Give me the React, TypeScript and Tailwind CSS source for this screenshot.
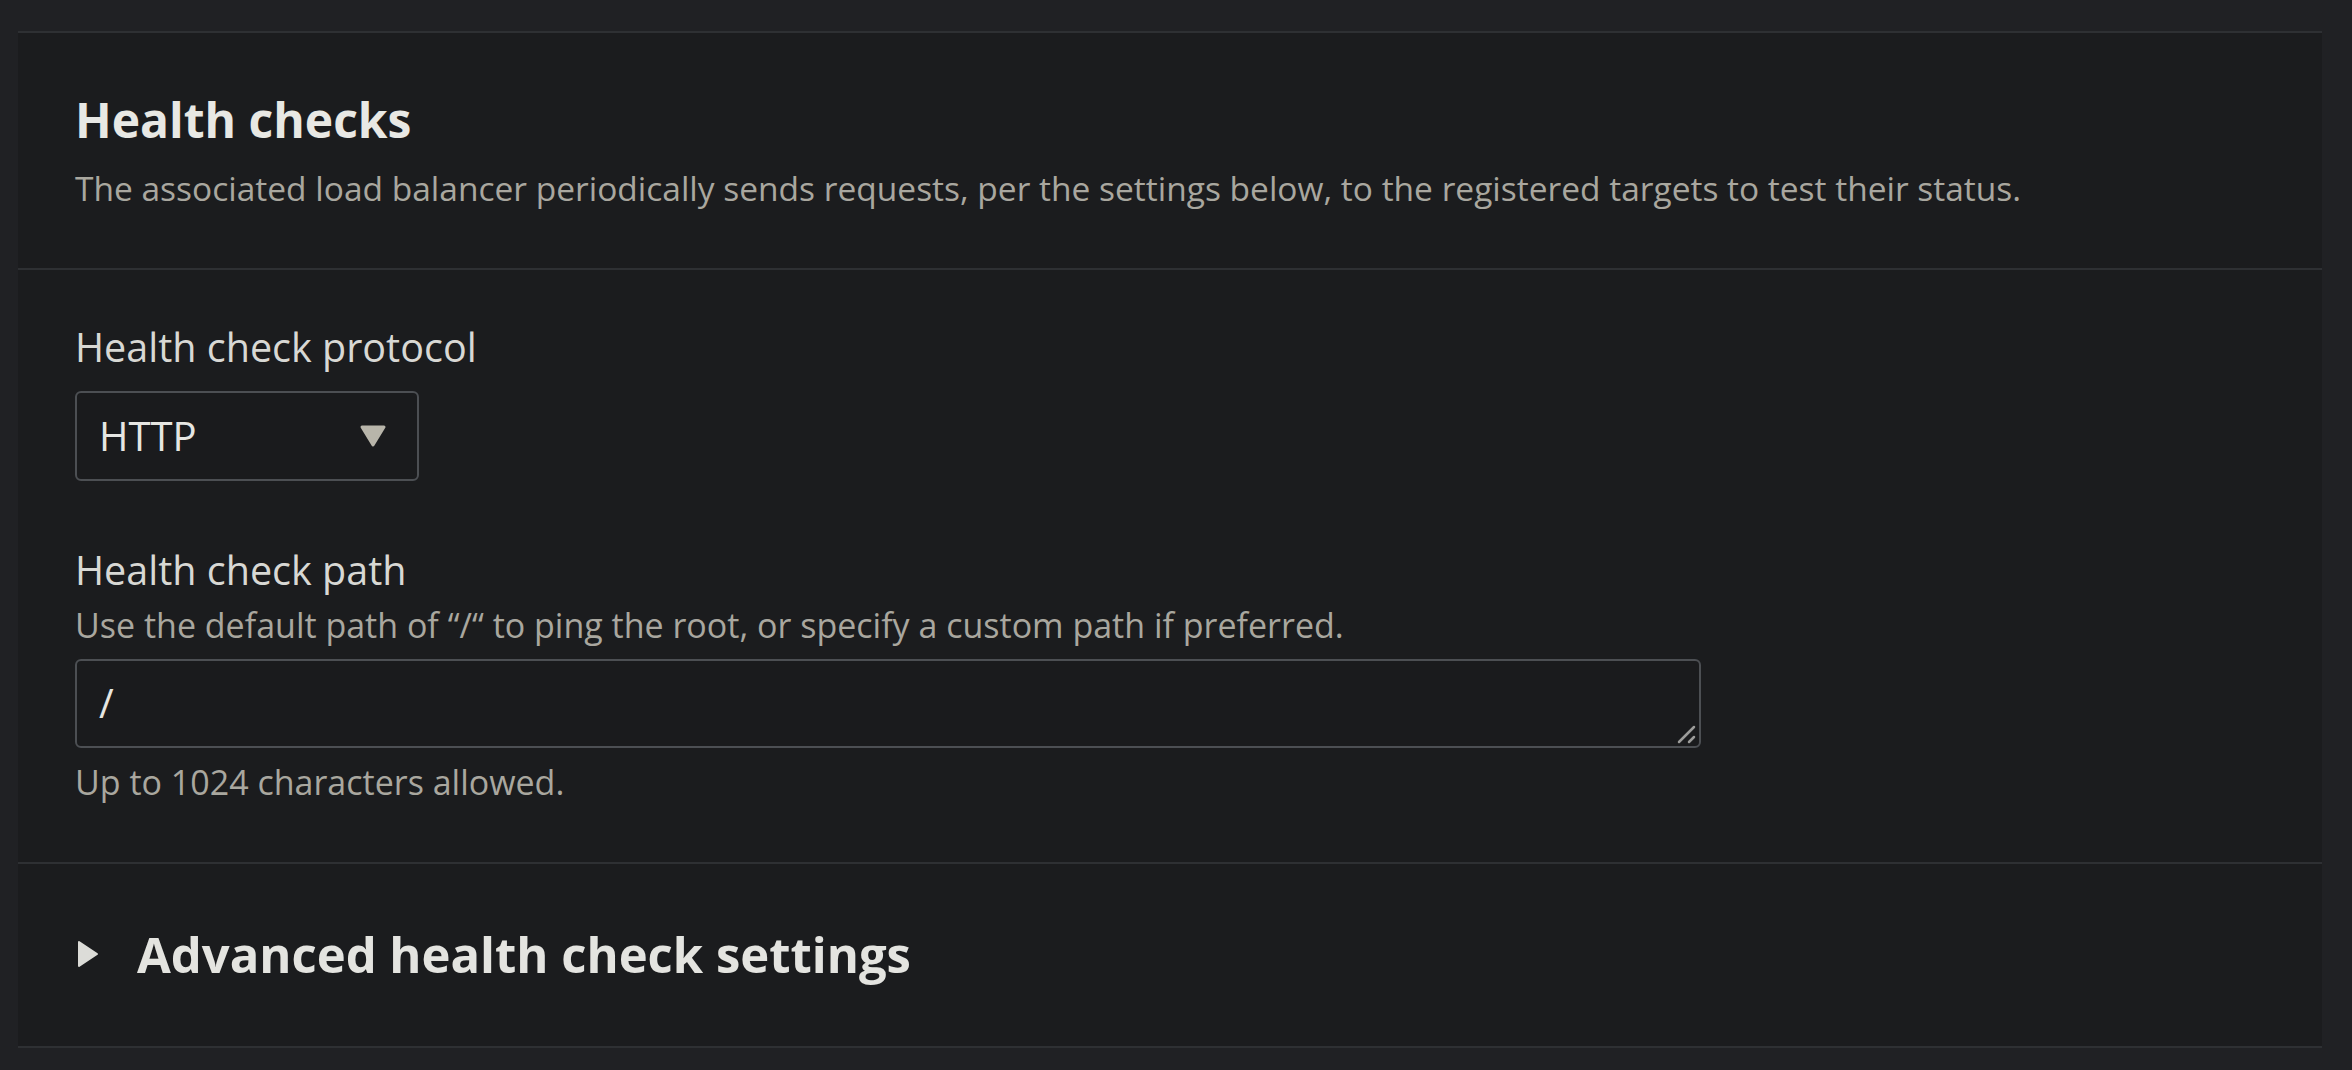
import React from "react";

const font = { fontFamily: '"Open Sans", "Noto Sans", "Liberation Sans", sans-serif' };

function CaretDown() {
  return (
    <svg width="28" height="24" viewBox="0 0 28 24" className="shrink-0">
      <path d="M3 3 L25 3 L14 21 Z" fill="#b8b5aa" stroke="#b8b5aa" strokeWidth="3" strokeLinejoin="round" />
    </svg>
  );
}

function CaretRight() {
  return (
    <svg width="24" height="30" viewBox="0 0 24 30" className="shrink-0">
      <path d="M3 3 L21 15 L3 27 Z" fill="#dcdcd8" stroke="#dcdcd8" strokeWidth="2" strokeLinejoin="round" />
    </svg>
  );
}

export default function App() {
  return (
    <div className="min-h-screen w-full bg-[#202124] pt-[31px] px-[18px] pr-[30px]" style={font}>
      {/* Health checks container */}
      <div className="bg-[#1b1c1e] border-y-2 border-[#2e3033]">
        {/* Header */}
        <div className="px-[57px] pt-[57px] pb-[58px]">
          <h2 className="text-[48px] leading-[60px] font-bold text-[#e8e8e4]">Health checks</h2>
          <p className="mt-[16px] text-[33.5px] leading-[44px] text-[#a9a79f]">
            The associated load balancer periodically sends requests, per the settings below, to the registered targets to test their status.
          </p>
        </div>

        {/* Fields */}
        <div className="border-t-2 border-[#2e3033] px-[57px] pt-[53px] pb-[60px]">
          <label className="block text-[39.5px] leading-[48px] font-medium text-[#d8d8d4]">Health check protocol</label>
          <div className="mt-[20px] flex h-[90px] w-[344px] items-center justify-between rounded-[6px] border-2 border-[#4c4f53] bg-[#1a1b1d] pl-[22px] pr-[30px]">
            <span className="text-[40px] leading-[48px] text-[#e6e6e2]">HTTP</span>
            <CaretDown />
          </div>

          <label className="mt-[65px] block text-[39.5px] leading-[48px] font-medium text-[#d8d8d4]">Health check path</label>
          <p className="mt-[11px] text-[34px] leading-[40px] text-[#a9a79f]">
            Use the default path of “/“ to ping the root, or specify a custom path if preferred.
          </p>
          <div className="relative mt-[14px] w-[1626px]">
            <textarea
              readOnly
              defaultValue="/"
              rows={1}
              className="block h-[89px] w-full resize-none overflow-hidden rounded-[6px] border-2 border-[#4c4f53] bg-[#1a1b1d] px-[22px] py-[18px] text-[40px] leading-[48px] text-[#e6e6e2] outline-none"
              style={font}
            />
            {/* resize grip */}
            <svg width="20" height="20" viewBox="0 0 20 20" className="absolute bottom-[4px] right-[4px]">
              <line x1="2" y1="18" x2="17" y2="3" stroke="#9c9c9a" strokeWidth="2.5" strokeLinecap="round" />
              <line x1="12" y1="18" x2="17" y2="13" stroke="#9c9c9a" strokeWidth="2.5" strokeLinecap="round" />
            </svg>
          </div>
          <p className="mt-[14px] text-[34px] leading-[40px] text-[#a9a79f]">Up to 1024 characters allowed.</p>
        </div>

        {/* Advanced settings expander */}
        <div className="border-t-2 border-[#2e3033] px-[58px] pt-[58px] pb-[60px]">
          <button className="flex items-center gap-[37px] text-left">
            <CaretRight />
            <span className="text-[49px] leading-[64px] font-bold text-[#e4e4e0]">Advanced health check settings</span>
          </button>
        </div>
      </div>
    </div>
  );
}
